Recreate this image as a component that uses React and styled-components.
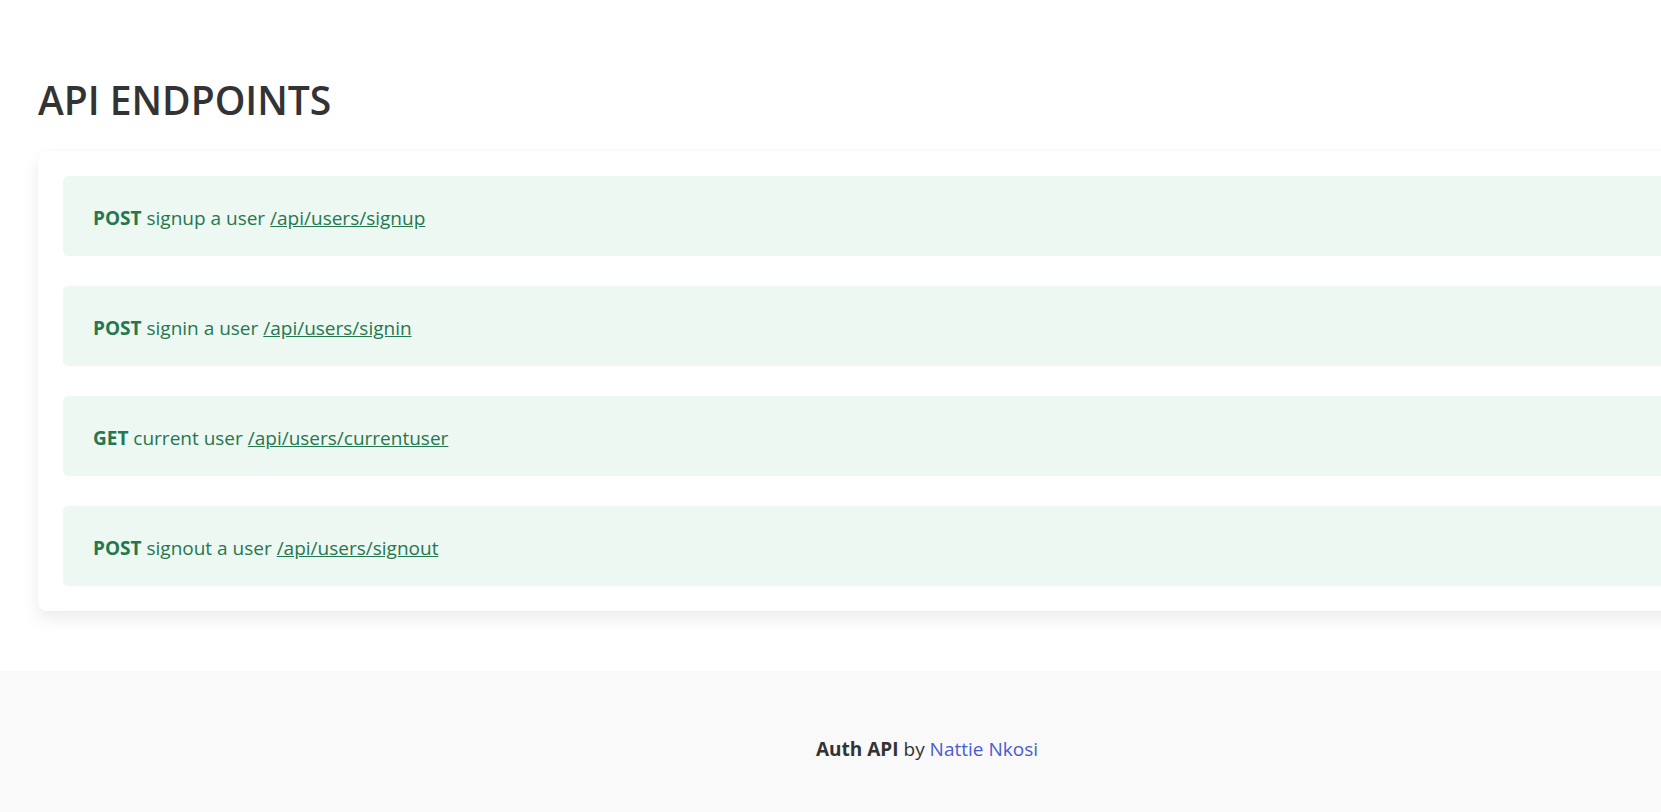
import React from "react";
import styled, { createGlobalStyle } from "styled-components";

const GlobalStyle = createGlobalStyle`
  html, body {
    margin: 0;
    padding: 0;
    overflow-x: hidden;
    background: #ffffff;
  }

  body {
    font-family: "Open Sans", "Noto Sans", "Liberation Sans", sans-serif;
    color: #333333;
  }
`;

const Page = styled.div`
  width: 1854px;
  min-height: 812px;
  display: flex;
  flex-direction: column;
`;

const Main = styled.main`
  padding: 77px 38px 40px;
`;

const Title = styled.h1`
  margin: 0 0 27px;
  font-size: 39px;
  font-weight: 600;
  line-height: 1.2;
  color: #333333;
`;

const Card = styled.section`
  background: #ffffff;
  border-radius: 8px;
  box-shadow: 0 8px 18px rgba(0, 0, 0, 0.08), 0 0 2px rgba(0, 0, 0, 0.04);
  padding: 25px;
  display: flex;
  flex-direction: column;
  gap: 30px;
`;

const Endpoint = styled.div`
  height: 80px;
  box-sizing: border-box;
  display: flex;
  align-items: center;
  padding: 5px 30px 0;
  background: #eef8f2;
  border-radius: 5px;
  color: #25774f;
  font-size: 19px;

  strong {
    font-weight: 700;
  }

  a {
    color: #25774f;
    text-decoration: underline;
  }
`;

const Footer = styled.footer`
  margin-top: auto;
  height: 141px;
  box-sizing: border-box;
  padding-top: 14px;
  background: #f9f9f9;
  display: flex;
  align-items: center;
  justify-content: center;
  font-size: 19px;
  color: #333333;

  strong {
    font-weight: 700;
  }

  a {
    color: #4a5bd4;
    text-decoration: none;
  }
`;

const endpoints = [
  { method: "POST", label: "signup a user", path: "/api/users/signup" },
  { method: "POST", label: "signin a user", path: "/api/users/signin" },
  { method: "GET", label: "current user", path: "/api/users/currentuser" },
  { method: "POST", label: "signout a user", path: "/api/users/signout" },
];

const App = () => {
  return (
    <Page>
      <GlobalStyle />
      <Main>
        <Title>API ENDPOINTS</Title>
        <Card>
          {endpoints.map((ep) => (
            <Endpoint key={ep.path}>
              <span>
                <strong>{ep.method}</strong> {ep.label}{" "}
                <a href={ep.path}>{ep.path}</a>
              </span>
            </Endpoint>
          ))}
        </Card>
      </Main>
      <Footer>
        <span>
          <strong>Auth API</strong> by <a href="#">Nattie Nkosi</a>
        </span>
      </Footer>
    </Page>
  );
};

export default App;
